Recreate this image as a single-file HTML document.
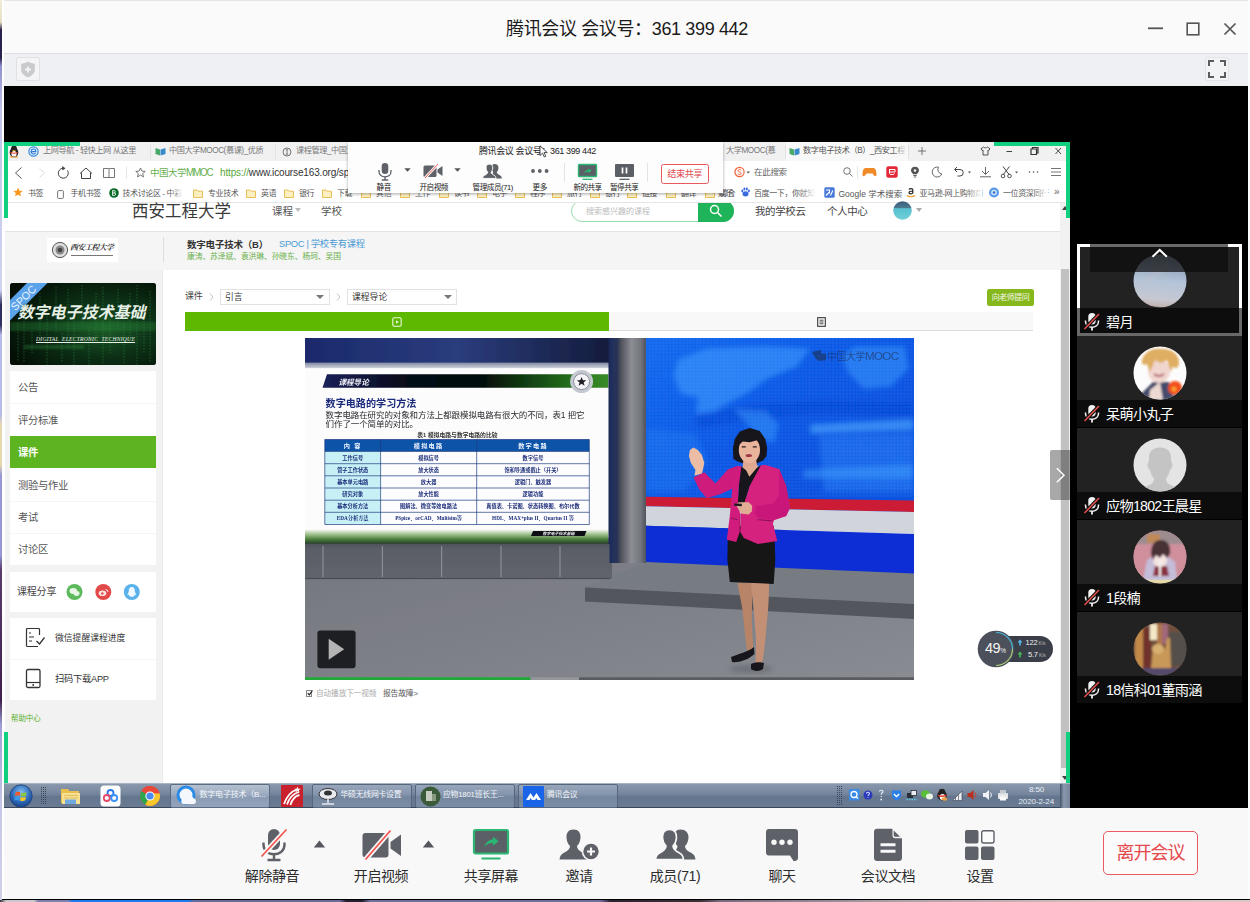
<!DOCTYPE html>
<html lang="zh-CN">
<head>
<meta charset="utf-8">
<title>腾讯会议</title>
<style>
*{box-sizing:border-box;margin:0;padding:0}
html,body{width:1250px;height:902px;overflow:hidden;background:#000}
body{position:relative;font-family:"Liberation Sans","Noto Sans CJK SC",sans-serif;color:#222}
.a{position:absolute}
.t{position:absolute;white-space:nowrap;line-height:1}
/* outer window */
#deskL{left:0;top:0;width:2px;height:902px;background:linear-gradient(#f0ecd8 0,#e8e0c0 22px,#2a2050 30px,#2a2050 58px,#9090d0 66px,#c0c4e8 110px,#d0d4f0 290px,#303060 305px,#303060 325px,#b8bce8 335px,#b8bce8 415px,#e8d8b0 425px,#e8d8b0 465px,#9898d8 475px,#9898d8 555px,#5a3a6a 570px,#40204a 700px,#a0a0d8 725px,#c8c8e8 810px,#d0d0e8 902px)}
#titlebar{left:4px;top:0;width:1246px;height:53px;background:#fafafb;border-top:1px solid #e4e4e6}
#bar2{left:4px;top:53px;width:1246px;height:33px;background:#eff0f3;border-top:1px solid #dcdde0}
#stage{left:4px;top:86px;width:1246px;height:722px;background:#000}
#toolbar{left:4px;top:808px;width:1246px;height:91px;background:#f8f8f9}
#deskB{left:0;top:899.500px;width:1250px;height:2.500px;background:linear-gradient(90deg,#303038 0,#c8c8d0 6px,#c8c8d0 34px,#8080b0 38px,#8080b0 68px,#1a7af0 72px,#1a7af0 188px,#6a6a9a 194px,#6a6a9a 340px,#202030 346px,#202030 362px,#7070a0 370px,#7070a0 600px,#2a2430 610px,#3a3038 700px,#7a6a80 720px,#b0a0a8 900px,#d0c0c0 1100px,#d8c8c8 1250px)}
/* shared screen */
#share{left:4px;top:142px;width:1066px;height:666px;background:#fff;overflow:hidden}
</style>
</head>
<body>
<div class="a" id="titlebar"></div>
<div class="a" id="bar2"></div>
<div class="a" id="stage"></div>
<div class="a" id="share">
<div class="a" id="sw" style="left:-4px;top:-142px;width:1250px;height:902px">
<style>
#sw .t{color:#555}
.tab{font-size:8.200px;top:147px;color:#777!important;letter-spacing:-0.45px}
.bm{font-size:8px;top:190px;color:#555!important;letter-spacing:-0.400px}
.fold{position:absolute;top:189px;width:10px;height:9px}
</style>
<!-- tab bar -->
<div class="a" style="left:5px;top:142px;width:1065px;height:19px;background:#f1f1f2"></div>
<div class="a" style="left:5px;top:161px;width:1065px;height:41px;background:#fff"></div>
<div class="a" style="left:5px;top:202px;width:1065px;height:1px;background:#e6e6e6"></div>
<div class="a" style="left:786px;top:142px;width:122px;height:19px;background:#f8f8f8"></div>
<div class="a" style="left:150px;top:145px;width:1px;height:14px;background:#e2e2e2"></div>
<div class="a" style="left:275px;top:145px;width:1px;height:14px;background:#e2e2e2"></div>
<div class="a" style="left:785px;top:145px;width:1px;height:14px;background:#e2e2e2"></div>
<div class="a" style="left:908px;top:145px;width:1px;height:14px;background:#e2e2e2"></div>
<!-- QQ penguin -->
<svg class="a" style="left:9px;top:145px" width="10" height="13" viewBox="0 0 10 13"><ellipse cx="5" cy="7.500" rx="4.300" ry="4.800" fill="#222"/><ellipse cx="5" cy="4" rx="3" ry="3.500" fill="#222"/><ellipse cx="5" cy="8.800" rx="2.600" ry="2.800" fill="#fff"/><path d="M1.500 6.800Q5 8.600 8.500 6.800L8.500 8Q5 9.600 1.500 8Z" fill="#e03a2a"/><ellipse cx="5" cy="5.600" rx="1.600" ry=".7" fill="#f0a020"/><ellipse cx="2.800" cy="12" rx="1.800" ry=".8" fill="#f0a020"/><ellipse cx="7.200" cy="12" rx="1.800" ry=".8" fill="#f0a020"/></svg>
<!-- e icon -->
<svg class="a" style="left:28px;top:146px" width="11" height="11" viewBox="0 0 11 11"><circle cx="5.500" cy="5.500" r="4.600" fill="#e8f2fc" stroke="#3a8ee0" stroke-width="1.300"/><path d="M3.200 5.600H7.800C7.800 3.800 6.800 3 5.500 3S3.200 4 3.200 5.600C3.200 7.300 4.200 8 5.600 8C6.500 8 7.200 7.700 7.600 7.200" stroke="#2a7ad8" stroke-width="1.100" fill="none"/></svg>
<div class="t tab" style="left:43px">上网导航 - 轻快上网 从这里</div>
<svg class="a" style="left:155px;top:147px" width="11" height="9" viewBox="0 0 11 9"><path d="M.5 1L5 2.500V8.500L.5 7Z" fill="#4aa868"/><path d="M10.500 1L5.500 2.500V8.500L10.500 7Z" fill="#3a8ac8"/></svg>
<div class="t tab" style="left:169px">中国大学MOOC(慕课)_优质</div>
<svg class="a" style="left:282px;top:147px" width="10" height="10" viewBox="0 0 10 10"><circle cx="5" cy="5" r="4" fill="none" stroke="#666" stroke-width=".9"/><path d="M5 2.800V7.200M3.800 2.800H6.200M3.800 7.200H6.200" stroke="#666" stroke-width=".8"/></svg>
<div class="t tab" style="left:296px">课程管理_中国大学MOOC</div>
<div class="t tab" style="left:726px">大学MOOC(慕</div>
<svg class="a" style="left:789px;top:147px" width="11" height="9" viewBox="0 0 11 9"><path d="M.5 1L5 2.500V8.500L.5 7Z" fill="#4aa868"/><path d="M10.500 1L5.500 2.500V8.500L10.500 7Z" fill="#3a8ac8"/></svg>
<div class="t tab" style="left:803px;color:#555!important">数字电子技术（B）_西安工程</div>
<div class="a" style="left:892px;top:143px;width:16px;height:18px;background:linear-gradient(90deg,rgba(248,248,248,0),#f8f8f8)"></div>
<svg class="a" style="left:917px;top:146px" width="10" height="10" viewBox="0 0 10 10"><path d="M5 1V9M1 5H9" stroke="#666" stroke-width=".9"/></svg>
<svg class="a" style="left:980px;top:146px" width="11" height="10" viewBox="0 0 11 10"><path d="M3.500 1L1 2.800L2.200 4.500L3 4V9H8V4L8.800 4.500L10 2.800L7.500 1C7 2 4 2 3.500 1Z" fill="none" stroke="#444" stroke-width=".9"/></svg>
<svg class="a" style="left:1005px;top:146px" width="60" height="10" viewBox="0 0 60 10"><path d="M1.500 5.500H7" stroke="#444" stroke-width="1"/><path d="M26 3H31.500V8.500H26ZM27.500 3V1.500H33V7H31.500" stroke="#333" stroke-width="1.200" fill="none"/><path d="M50.500 2L56 8M56 2L50.500 8" stroke="#444" stroke-width="1"/></svg>
<!-- nav bar -->
<svg class="a" style="left:12px;top:164px" width="110" height="18" viewBox="0 0 110 18">
<path d="M9.500 3.500L3.500 9L9.500 14.500" stroke="#555" stroke-width="1" fill="none"/>
<path d="M27.500 4.500L32.500 9L27.500 13.500" stroke="#ddd" stroke-width="1" fill="none"/>
<path d="M55.500 6.500A5 5 0 1 1 51 4.200" stroke="#444" stroke-width="1" fill="none"/><path d="M50 2L53.500 4.200L50.500 6.500Z" fill="#444"/>
<path d="M68 9.500L74 4L80 9.500M69.500 8.500V14.500H78.500V8.500" stroke="#444" stroke-width="1" fill="none"/>
<path d="M91.500 4.500H96.500Q97 4.500 97 5V13.500M97 13.500H91.500V4.500M97 5Q97 4.500 97.500 4.500H102.500V13.500H97" stroke="#666" stroke-width=".9" fill="none"/>
</svg>
<div class="a" style="left:126px;top:166px;width:1px;height:13px;background:#e8e8e8"></div>
<svg class="a" style="left:135px;top:167px" width="11" height="11" viewBox="0 0 11 11"><path d="M5.500 1L6.900 4.100L10.200 4.400L7.700 6.600L8.500 9.900L5.500 8.100L2.500 9.900L3.300 6.600L.8 4.400L4.100 4.100Z" fill="none" stroke="#555" stroke-width=".8"/></svg>
<div class="t" style="left:150px;top:168px;font-size:9.500px;color:#68b050!important;letter-spacing:-0.500px">中国大学<span style="font-size:10px;letter-spacing:-1.300px">MMOC</span></div>
<div class="t" style="left:220px;top:168px;font-size:10px;color:#333!important;letter-spacing:-0.150px"><span style="color:#58a840">https://</span>www.icourse163.org/spoc/learn</div>
<svg class="a" style="left:734px;top:166px" width="18" height="12" viewBox="0 0 18 12"><circle cx="5.500" cy="6" r="4.600" fill="#fff" stroke="#f0603a" stroke-width="1.200"/><path d="M7.200 4.200C6.500 3.300 4 3.300 4 4.800C4 6.200 7.200 5.800 7.200 7.300C7.200 8.800 4.500 8.800 3.700 7.800" stroke="#f0603a" stroke-width="1" fill="none"/><path d="M12.500 5.500L14.200 7.500L16 5.500Z" fill="#555"/></svg>
<div class="t" style="left:754px;top:168px;font-size:8.500px;color:#666!important;letter-spacing:-0.300px">在此搜索</div>
<svg class="a" style="left:842px;top:166px" width="12" height="12" viewBox="0 0 12 12"><circle cx="5" cy="5" r="3.300" fill="none" stroke="#666" stroke-width=".9"/><path d="M7.500 7.500L10.500 10.500" stroke="#666" stroke-width=".9"/></svg>
<div class="a" style="left:857px;top:166px;width:1px;height:13px;background:#e8e8e8"></div>
<svg class="a" style="left:862px;top:167px" width="15" height="10" viewBox="0 0 15 10"><path d="M3.500 1H11.500C14 1 14.500 5 14.500 8C14.500 9.500 12.500 9.500 11.500 8L10.500 6.500H4.500L3.500 8C2.500 9.500 .5 9.500 .5 8C.5 5 1 1 3.500 1Z" fill="#f08a28"/></svg>
<svg class="a" style="left:886px;top:166px" width="12" height="12" viewBox="0 0 12 12"><rect x=".3" y=".3" width="11.400" height="11.400" rx="2" fill="#e02838"/><path d="M3 3.500H9V6H3.500M3.500 3.500V7.500C3.500 9 8.500 9 8.500 7.500" stroke="#fff" stroke-width="1" fill="none"/></svg>
<svg class="a" style="left:910px;top:166px" width="10" height="12" viewBox="0 0 10 12"><path d="M5 .8C2.500 .8 1 2.500 1 4.500C1 6.200 2.500 7 3 8.200H7C7.500 7 9 6.200 9 4.500C9 2.500 7.500 .8 5 .8Z" fill="#555"/><path d="M3.300 9.500H6.700M3.800 11H6.200" stroke="#555" stroke-width=".9"/><circle cx="5" cy="4.500" r="1.200" fill="#fff"/></svg>
<svg class="a" style="left:931px;top:166px" width="12" height="12" viewBox="0 0 12 12"><path d="M7.500 1.200A5 5 0 1 0 10.800 8A4.500 4.500 0 0 1 7.500 1.200Z" fill="none" stroke="#555" stroke-width=".9"/></svg>
<svg class="a" style="left:953px;top:166px" width="20" height="12" viewBox="0 0 20 12"><path d="M2 3.500H7A3.200 3.200 0 0 1 7 10H4.500" stroke="#444" stroke-width="1" fill="none"/><path d="M4 1L1.500 3.500L4 6" stroke="#444" stroke-width="1" fill="none"/><path d="M15 5.500L16.500 7.500L18 5.500Z" fill="#555"/></svg>
<svg class="a" style="left:979px;top:166px" width="13" height="12" viewBox="0 0 13 12"><path d="M6.500 1V8M3 5L6.500 8.500L10 5M1 10.800H12" stroke="#555" stroke-width=".9" fill="none"/></svg>
<svg class="a" style="left:1000px;top:165px" width="20" height="14" viewBox="0 0 20 14"><path d="M3 1.500L9.500 10M9.500 1.500L3 10" stroke="#444" stroke-width="1"/><circle cx="3" cy="11" r="1.800" fill="none" stroke="#444" stroke-width=".9"/><circle cx="9.500" cy="11" r="1.800" fill="none" stroke="#444" stroke-width=".9"/><path d="M15 6.500L16.500 8.500L18 6.500Z" fill="#555"/></svg>
<svg class="a" style="left:1028px;top:170px" width="11" height="4" viewBox="0 0 11 4"><circle cx="1.500" cy="2" r=".8" fill="#555"/><circle cx="5.500" cy="2" r=".8" fill="#555"/><circle cx="9.500" cy="2" r=".8" fill="#555"/></svg>
<svg class="a" style="left:1051px;top:167px" width="10" height="10" viewBox="0 0 10 10"><path d="M0 1.500H10M0 5H10M0 8.500H10" stroke="#666" stroke-width=".9"/></svg>
<!-- bookmarks -->
<svg class="a" style="left:13px;top:187px" width="10" height="10" viewBox="0 0 11 11"><path d="M5.500 .5L7 4L10.700 4.300L7.900 6.700L8.800 10.300L5.500 8.400L2.200 10.300L3.100 6.700L.3 4.300L4 4Z" fill="#f89820"/></svg>
<div class="t bm" style="left:28px">书签</div>
<svg class="a" style="left:57px;top:189.500px" width="7" height="9" viewBox="0 0 7 9"><rect x=".6" y=".6" width="5.800" height="7.800" rx=".8" fill="#fff" stroke="#666" stroke-width=".9"/></svg>
<div class="t bm" style="left:70.500px">手机书签</div>
<svg class="a" style="left:109px;top:187.500px" width="10" height="10" viewBox="0 0 10 10"><circle cx="5" cy="5" r="4.800" fill="#0a6a2a"/><path d="M3.600 2.600V7.400H5.500C7 7.400 7 5 5.500 5H3.600M5.300 5C6.600 5 6.600 2.600 5.300 2.600H3.600" stroke="#fff" stroke-width=".9" fill="none"/></svg>
<div class="t bm" style="left:122.500px">技术讨论区 - 中彩</div>
<div class="a" style="left:168px;top:186px;width:18px;height:14px;background:linear-gradient(90deg,rgba(255,255,255,0),#fff)"></div>
<svg class="fold" style="left:193px" viewBox="0 0 10 9"><path d="M.5 1H4L5 2.200H9.500V8.500H.5Z" fill="#fdf0c0" stroke="#e8b848" stroke-width=".9"/></svg><div class="t bm" style="left:208px">专业技术</div>
<svg class="fold" style="left:246px" viewBox="0 0 10 9"><path d="M.5 1H4L5 2.200H9.500V8.500H.5Z" fill="#fdf0c0" stroke="#e8b848" stroke-width=".9"/></svg><div class="t bm" style="left:261px">英语</div>
<svg class="fold" style="left:284px" viewBox="0 0 10 9"><path d="M.5 1H4L5 2.200H9.500V8.500H.5Z" fill="#fdf0c0" stroke="#e8b848" stroke-width=".9"/></svg><div class="t bm" style="left:299px">银行</div>
<svg class="fold" style="left:322px" viewBox="0 0 10 9"><path d="M.5 1H4L5 2.200H9.500V8.500H.5Z" fill="#fdf0c0" stroke="#e8b848" stroke-width=".9"/></svg><div class="t bm" style="left:337px">下载</div>
<svg class="fold" style="left:361px" viewBox="0 0 10 9"><path d="M.5 1H4L5 2.200H9.500V8.500H.5Z" fill="#fdf0c0" stroke="#e8b848" stroke-width=".9"/></svg><div class="t bm" style="left:376px">其他</div><svg class="fold" style="left:400px" viewBox="0 0 10 9"><path d="M.5 1H4L5 2.200H9.500V8.500H.5Z" fill="#fdf0c0" stroke="#e8b848" stroke-width=".9"/></svg><div class="t bm" style="left:415px">工作</div><svg class="fold" style="left:439px" viewBox="0 0 10 9"><path d="M.5 1H4L5 2.200H9.500V8.500H.5Z" fill="#fdf0c0" stroke="#e8b848" stroke-width=".9"/></svg><div class="t bm" style="left:454px">读书</div><svg class="fold" style="left:477px" viewBox="0 0 10 9"><path d="M.5 1H4L5 2.200H9.500V8.500H.5Z" fill="#fdf0c0" stroke="#e8b848" stroke-width=".9"/></svg><div class="t bm" style="left:492px">电子</div><svg class="fold" style="left:515px" viewBox="0 0 10 9"><path d="M.5 1H4L5 2.200H9.500V8.500H.5Z" fill="#fdf0c0" stroke="#e8b848" stroke-width=".9"/></svg><div class="t bm" style="left:530px">程序</div><svg class="fold" style="left:552px" viewBox="0 0 10 9"><path d="M.5 1H4L5 2.200H9.500V8.500H.5Z" fill="#fdf0c0" stroke="#e8b848" stroke-width=".9"/></svg><div class="t bm" style="left:567px">旅行</div><svg class="fold" style="left:590px" viewBox="0 0 10 9"><path d="M.5 1H4L5 2.200H9.500V8.500H.5Z" fill="#fdf0c0" stroke="#e8b848" stroke-width=".9"/></svg><div class="t bm" style="left:605px">银行</div><svg class="fold" style="left:627px" viewBox="0 0 10 9"><path d="M.5 1H4L5 2.200H9.500V8.500H.5Z" fill="#fdf0c0" stroke="#e8b848" stroke-width=".9"/></svg><div class="t bm" style="left:642px">链接</div><svg class="fold" style="left:666px" viewBox="0 0 10 9"><path d="M.5 1H4L5 2.200H9.500V8.500H.5Z" fill="#fdf0c0" stroke="#e8b848" stroke-width=".9"/></svg><div class="t bm" style="left:681px">翻译</div><svg class="fold" style="left:705px" viewBox="0 0 10 9"><path d="M.5 1H4L5 2.200H9.500V8.500H.5Z" fill="#fdf0c0" stroke="#e8b848" stroke-width=".9"/></svg><div class="t bm" style="left:720px">综合</div><div class="t bm" style="left:718px">娱乐</div>
<svg class="a" style="left:741px;top:187px" width="9" height="10" viewBox="0 0 9 10"><ellipse cx="4.500" cy="6.800" rx="3" ry="2.600" fill="#3a6ae0"/><ellipse cx="1.300" cy="4" rx="1" ry="1.400" fill="#3a6ae0"/><ellipse cx="3.400" cy="2" rx="1" ry="1.400" fill="#3a6ae0"/><ellipse cx="5.800" cy="2" rx="1" ry="1.400" fill="#3a6ae0"/><ellipse cx="7.800" cy="4" rx="1" ry="1.400" fill="#3a6ae0"/></svg>
<div class="t bm" style="left:754px">百度一下，你就知</div>
<div class="a" style="left:798px;top:186px;width:18px;height:14px;background:linear-gradient(90deg,rgba(255,255,255,0),#fff)"></div>
<svg class="a" style="left:824px;top:187px" width="11" height="11" viewBox="0 0 11 11"><rect x=".3" y=".3" width="10.400" height="10.400" rx="1.500" fill="#4a7ad8"/><path d="M2 3H5.500V6.500M2 8.500L5.500 5M6.500 8.500L8.800 3.500" stroke="#fff" stroke-width="1.100" fill="none"/></svg>
<div class="t bm" style="left:838.500px;font-size:8.500px;letter-spacing:0">Google 学术搜索</div>
<svg class="a" style="left:906px;top:186px" width="10" height="12" viewBox="0 0 10 12"><path d="M3 3.500C3.500 2.300 6.800 2 6.800 4V7.500M6.800 5C4.500 5 3 5.500 3 6.800C3 8.200 5.500 8.200 6.800 6.800" stroke="#222" stroke-width="1.200" fill="none"/><path d="M.8 9.500Q5 12 9.200 9.500" stroke="#f09820" stroke-width="1.100" fill="none"/></svg>
<div class="t bm" style="left:919.500px">亚马逊-网上购物商</div>
<div class="a" style="left:964px;top:186px;width:18px;height:14px;background:linear-gradient(90deg,rgba(255,255,255,0),#fff)"></div>
<svg class="a" style="left:988px;top:187px" width="12" height="11" viewBox="0 0 12 11"><circle cx="6" cy="5.500" r="5" fill="#5a9ae8"/><circle cx="6" cy="5.500" r="2.800" fill="#d0e4fa"/><circle cx="6" cy="5.500" r="1.300" fill="#3a70c8"/></svg>
<div class="t bm" style="left:1003px">一位资深同行</div>
<div class="a" style="left:1034px;top:186px;width:14px;height:14px;background:linear-gradient(90deg,rgba(255,255,255,0),#fff)"></div>
<div class="t" style="left:1054px;top:187px;font-size:10px;color:#666!important">»</div>

<!-- page header -->
<div class="a" style="left:5px;top:203px;width:1056px;height:28px;background:#fff"></div>
<div class="a" style="left:5px;top:231px;width:1056px;height:39px;background:#f5f5f5;border-top:1px solid #e4e4e4"></div>
<div class="t" style="left:132px;top:203.300px;font-size:16.500px;color:#3a3a3a!important;letter-spacing:0">西安工程大学</div>
<div class="t" style="left:272px;top:205.600px;font-size:10.500px;color:#555!important">课程</div>
<svg class="a" style="left:295px;top:208px" width="6" height="4" viewBox="0 0 6 4"><path d="M0 0H6L3 4Z" fill="#bbb"/></svg>
<div class="t" style="left:321px;top:205.600px;font-size:10.500px;color:#555!important">学校</div>
<div class="a" style="left:5px;top:203px;width:1056px;height:28px;overflow:hidden">
<div class="a" style="left:566px;top:-3px;width:163px;height:22px;border:1px solid #9adcb0;border-radius:11px;background:#fff"></div>
<div class="t" style="left:581px;top:4.500px;font-size:8px;color:#bbb!important">搜索感兴趣的课程</div>
<div class="a" style="left:693px;top:-3px;width:36px;height:22px;border-radius:0 11px 11px 0;background:#20b45a"></div>
<svg class="a" style="left:704px;top:1px" width="14" height="14" viewBox="0 0 14 14"><circle cx="5.500" cy="5.500" r="4" fill="none" stroke="#fff" stroke-width="1.500"/><path d="M8.500 8.500L12.500 12.500" stroke="#fff" stroke-width="1.600"/></svg>
</div>
<div class="t" style="left:755px;top:206px;font-size:10.500px;color:#444!important;letter-spacing:-0.4px">我的学校云</div>
<div class="t" style="left:827px;top:206px;font-size:10.500px;color:#444!important;letter-spacing:-0.4px">个人中心</div>
<svg class="a" style="left:893px;top:201px" width="19" height="19" viewBox="0 0 19 19"><defs><linearGradient id="ug" x1="0" y1="0" x2="0" y2="1"><stop offset="0" stop-color="#3a5a78"/><stop offset=".35" stop-color="#4a7a90"/><stop offset=".4" stop-color="#58c0d0"/><stop offset="1" stop-color="#70d0d8"/></linearGradient></defs><circle cx="9.500" cy="9.500" r="9.300" fill="url(#ug)"/></svg>
<svg class="a" style="left:916px;top:208px" width="6" height="4" viewBox="0 0 6 4"><path d="M0 0H6L3 4Z" fill="#aaa"/></svg>
<!-- course header band -->
<div class="a" style="left:47px;top:238px;width:71px;height:24px;background:#fff"></div>
<svg class="a" style="left:51px;top:241px" width="66" height="18" viewBox="0 0 66 18"><circle cx="9" cy="9" r="7.600" fill="#ddd" stroke="#555" stroke-width="1"/><circle cx="9" cy="9" r="4.500" fill="#888"/><circle cx="9" cy="9" r="2.300" fill="#444"/></svg>
<div class="t" style="left:70px;top:243.500px;font-size:7.800px;font-family:'Liberation Serif','Noto Serif CJK SC',serif;font-style:italic;font-weight:bold;color:#333!important;letter-spacing:-0.6px">西安工程大学</div>
<div class="a" style="left:71px;top:254.500px;width:42px;height:1.500px;background:#777"></div>
<div class="a" style="left:163px;top:237px;width:1px;height:25px;background:#ddd"></div>
<div class="t" style="left:187px;top:239.500px;font-size:9.500px;font-weight:bold;color:#333!important;letter-spacing:-0.2px">数字电子技术（B）</div>
<div class="t" style="left:279px;top:239.500px;font-size:9.300px;color:#4a9ad4!important;letter-spacing:-0.3px">SPOC | 学校专有课程</div>
<div class="t" style="left:187px;top:253px;font-size:7.800px;color:#6ab04a!important;letter-spacing:-0.1px">康涛、苏泽斌、袁洪琳、孙晓东、杨珂、吴国</div>
<!-- sidebar -->
<div class="a" style="left:5px;top:270px;width:157px;height:513px;background:#f2f2f2"></div>
<div class="a" style="left:162px;top:270px;width:899px;height:513px;background:#fff"></div>
<div class="a" style="left:162px;top:270px;width:1px;height:513px;background:#ebebeb"></div>
<!-- course image -->
<div class="a" style="left:10px;top:283px;width:146px;height:82px;border-radius:3px;overflow:hidden;background:#07200f">
<svg class="a" style="left:0;top:0" width="146" height="82" viewBox="0 0 146 82">
<defs><radialGradient id="cg" cx=".65" cy=".55" r=".7"><stop offset="0" stop-color="#1c5c28"/><stop offset=".5" stop-color="#0c3016"/><stop offset="1" stop-color="#041006"/></radialGradient>
<filter id="cb"><feGaussianBlur stdDeviation="1.200"/></filter></defs>
<rect width="146" height="82" fill="url(#cg)"/>
<g stroke="#3a9a48" stroke-width="1" opacity=".45" stroke-dasharray="1.500 1.500">
<path d="M8 40V78M14 20V80M22 48V70M30 10V60M37 30V82M46 4V50M52 50V80M58 6V66M64 36V82M72 2V40M79 44V82M86 10V58M93 4V82M100 30V70M108 6V48M114 40V82M120 10V60M127 2V82M134 20V70M140 8V80"/></g>
<rect x="0" y="39" width="146" height="9" fill="#2a8a3a" opacity=".35" filter="url(#cb)"/>
<rect x="14" y="62" width="60" height="4" fill="#3aa04a" opacity=".3" filter="url(#cb)"/>
<path d="M0 37.500L37.500 0H17L0 17Z" fill="#5aa2ea"/>
</svg>
<div class="t" style="left:7.500px;top:21.500px;font-size:16px;font-weight:bold;font-style:italic;color:#e6efe6!important;letter-spacing:0;text-shadow:0 0 2px #083010">数字电子技术基础</div>
<div class="t" style="left:21px;top:54px;font-size:5.600px;font-family:'Liberation Serif',serif;font-style:italic;color:#e8f0e8!important;letter-spacing:.25px;text-decoration:underline;padding:0 3px 0 5px">DIGITAL&nbsp; ELECTRONIC&nbsp; TECHNIQUE</div>
<div class="t" style="left:1px;top:8px;font-size:10.800px;color:#eaf4ff!important;transform:rotate(-45deg);transform-origin:left top;left:-1.500px;top:22px;letter-spacing:0">SPOC</div>
</div>
<!-- menu -->
<div class="a" style="left:10px;top:371px;width:146px;height:194px;background:#fff"></div>
<div class="t" style="left:18px;top:383.3px;font-size:10.300px;color:#555!important;letter-spacing:-0.3px">公告</div><div class="a" style="left:10px;top:403.4px;width:146px;height:1px;background:#f5f5f5"></div><div class="t" style="left:18px;top:415.7px;font-size:10.300px;color:#555!important;letter-spacing:-0.3px">评分标准</div><div class="a" style="left:10px;top:436.3px;width:146px;height:31.500px;background:#5cb420"></div><div class="t" style="left:18px;top:448.1px;font-size:10.300px;color:#fff!important;font-weight:bold;letter-spacing:-0.3px">课件</div><div class="t" style="left:18px;top:480.5px;font-size:10.300px;color:#555!important;letter-spacing:-0.3px">测验与作业</div><div class="a" style="left:10px;top:500.6px;width:146px;height:1px;background:#f5f5f5"></div><div class="t" style="left:18px;top:512.9px;font-size:10.300px;color:#555!important;letter-spacing:-0.3px">考试</div><div class="a" style="left:10px;top:533.0px;width:146px;height:1px;background:#f5f5f5"></div><div class="t" style="left:18px;top:545.3px;font-size:10.300px;color:#555!important;letter-spacing:-0.3px">讨论区</div>
<!-- share box -->
<div class="a" style="left:10px;top:572px;width:146px;height:40px;background:#fff"></div>
<div class="t" style="left:17px;top:587px;font-size:10px;color:#444!important;letter-spacing:-0.2px">课程分享</div>
<svg class="a" style="left:66px;top:583px" width="75" height="18" viewBox="0 0 75 18">
<circle cx="8.500" cy="9" r="8" fill="#5cba5c"/><ellipse cx="7.300" cy="8" rx="3.800" ry="3" fill="#e8f6e8"/><ellipse cx="10.500" cy="10.500" rx="3" ry="2.400" fill="#e8f6e8"/>
<circle cx="37.300" cy="9" r="8" fill="#e24a4a"/><ellipse cx="36.500" cy="10.300" rx="3.800" ry="2.800" fill="#fbe4e4"/><circle cx="36.300" cy="10.500" r="1.200" fill="#e24a4a"/><path d="M39.500 6.500A2.500 2.500 0 0 1 42 9" stroke="#fbe4e4" stroke-width="1" fill="none"/>
<circle cx="65.800" cy="9" r="8" fill="#5ab2ea"/><path d="M65.800 4C63.500 4 62.800 6 62.800 8C62.800 9.500 61.500 10.500 61.500 12.200C62.300 12.200 62.800 11.500 62.800 11.500C63 13 64 13.800 65.800 13.800S68.600 13 68.800 11.500C68.800 11.500 69.300 12.200 70.100 12.200C70.100 10.500 68.800 9.500 68.800 8C68.800 6 68.100 4 65.800 4Z" fill="#f0f8ff"/>
</svg>
<!-- box 3 -->
<div class="a" style="left:10px;top:618px;width:146px;height:82px;background:#fff"></div>
<div class="a" style="left:10px;top:658.500px;width:146px;height:1px;background:#f5f5f5"></div>
<svg class="a" style="left:25px;top:627px" width="22" height="21" viewBox="0 0 22 21"><path d="M14.500 8V2.500Q14.500 1.500 13.500 1.500H2.500Q1.500 1.500 1.500 2.500V18.500Q1.500 19.500 2.500 19.500H13" stroke="#333" stroke-width="1.200" fill="none"/><path d="M4 6H6M4 10H9M4 14H7" stroke="#333" stroke-width="1.200"/><path d="M11.500 14L14.500 17L19.500 10.500" stroke="#333" stroke-width="1.300" fill="none"/></svg>
<div class="t" style="left:55px;top:634px;font-size:8.800px;color:#333!important;letter-spacing:0">微信提醒课程进度</div>
<svg class="a" style="left:25px;top:668px" width="17" height="21" viewBox="0 0 17 21"><rect x="1.500" y="1.500" width="13.500" height="18" rx="1.500" fill="none" stroke="#333" stroke-width="1.300"/><path d="M1.500 14.500H15" stroke="#333" stroke-width="1.200"/><circle cx="8.200" cy="17" r=".9" fill="#333"/></svg>
<div class="t" style="left:55px;top:675px;font-size:9.300px;color:#333!important;letter-spacing:-0.300px">扫码下载APP</div>
<div class="t" style="left:11px;top:715px;font-size:7.500px;color:#5cb02c!important;letter-spacing:-0.100px">帮助中心</div>
<!-- breadcrumb -->
<div class="t" style="left:185px;top:292px;font-size:9px;color:#444!important;letter-spacing:-0.300px">课件</div>
<svg class="a" style="left:209px;top:293px" width="5" height="8" viewBox="0 0 5 8"><path d="M1 .5L4 4L1 7.500" stroke="#bbb" stroke-width=".9" fill="none"/></svg>
<div class="a" style="left:220px;top:289px;width:110px;height:16px;border:1px solid #e2e2e2;background:#fff"></div>
<div class="t" style="left:225px;top:292.500px;font-size:8.800px;color:#333!important">引言</div>
<svg class="a" style="left:316px;top:295px" width="8" height="4" viewBox="0 0 8 4"><path d="M0 0H8L4 4Z" fill="#777"/></svg>
<svg class="a" style="left:336px;top:293px" width="5" height="8" viewBox="0 0 5 8"><path d="M1 .5L4 4L1 7.500" stroke="#bbb" stroke-width=".9" fill="none"/></svg>
<div class="a" style="left:347px;top:289px;width:110px;height:16px;border:1px solid #e2e2e2;background:#fff"></div>
<div class="t" style="left:352px;top:292.500px;font-size:8.800px;color:#333!important">课程导论</div>
<svg class="a" style="left:443.500px;top:295px" width="8" height="4" viewBox="0 0 8 4"><path d="M0 0H8L4 4Z" fill="#777"/></svg>
<div class="a" style="left:987px;top:289px;width:47px;height:17px;background:#86b71c;border-radius:2.500px"></div>
<div class="t" style="left:987px;top:293.500px;width:47px;text-align:center;font-size:8px;color:#f4f8e8!important;letter-spacing:-0.5px">向老师提问</div>
<!-- tabs -->
<div class="a" style="left:185px;top:312px;width:424px;height:19px;background:#5fb800"></div>
<div class="a" style="left:609px;top:312px;width:424px;height:19px;background:#f8f8f8;border-bottom:1px solid #ddd"></div>
<svg class="a" style="left:392px;top:316.500px" width="10" height="10" viewBox="0 0 10 10"><rect x=".8" y=".8" width="8.400" height="8.400" rx="1.500" fill="none" stroke="#eef8e0" stroke-width="1.100"/><path d="M4 3.200L6.800 5L4 6.800Z" fill="#eef8e0"/></svg>
<svg class="a" style="left:817px;top:316.500px" width="9" height="10" viewBox="0 0 9 10"><rect x=".7" y=".7" width="7.600" height="8.600" fill="#fff" stroke="#333" stroke-width="1.100"/><path d="M2.500 3.200H6.500M2.500 5H6.500M2.500 6.800H6.500" stroke="#333" stroke-width=".9"/></svg>

<svg class="a" style="left:305px;top:338px" width="609" height="342" viewBox="0 0 609 342" font-family="Liberation Sans,Noto Sans CJK SC,sans-serif">
<defs>
<filter id="vb" x="-5%" y="-5%" width="110%" height="110%"><feGaussianBlur stdDeviation="0.55"/></filter>
<filter id="vb3" x="-20%" y="-20%" width="140%" height="140%"><feGaussianBlur stdDeviation="6"/></filter>
<filter id="vb2" x="-20%" y="-20%" width="140%" height="140%"><feGaussianBlur stdDeviation="2.500"/></filter>
<linearGradient id="topb" x1="0" y1="0" x2="1" y2="0"><stop offset="0" stop-color="#1a2a6c"/><stop offset=".5" stop-color="#2a3c7c"/><stop offset="1" stop-color="#141c3c"/></linearGradient>
<linearGradient id="silv" x1="0" y1="0" x2="0" y2="1"><stop offset="0" stop-color="#8088a0"/><stop offset="1" stop-color="#d4d8e0"/></linearGradient>
<linearGradient id="pil" x1="0" y1="0" x2="1" y2="0"><stop offset="0" stop-color="#1c2c5c"/><stop offset=".22" stop-color="#2a3458"/><stop offset=".3" stop-color="#4c4e58"/><stop offset=".6" stop-color="#8c8e94"/><stop offset=".85" stop-color="#74767e"/><stop offset="1" stop-color="#50525c"/></linearGradient>
<linearGradient id="wall" x1="0" y1="0" x2="1" y2="1"><stop offset="0" stop-color="#1268ee"/><stop offset=".35" stop-color="#0a58e6"/><stop offset=".7" stop-color="#084ede"/><stop offset="1" stop-color="#0a54e2"/></linearGradient>
<linearGradient id="stbar" x1="0" y1="0" x2="1" y2="0"><stop offset="0" stop-color="#1a2258"/><stop offset=".3" stop-color="#060818"/><stop offset=".55" stop-color="#040a08"/><stop offset=".75" stop-color="#144a14"/><stop offset=".9" stop-color="#2a7a1e"/><stop offset="1" stop-color="#3a8a2a"/></linearGradient>
<linearGradient id="botb" x1="0" y1="0" x2="0" y2="1"><stop offset="0" stop-color="#f4f6f2"/><stop offset=".35" stop-color="#9cc088"/><stop offset=".7" stop-color="#4a7c3a"/><stop offset="1" stop-color="#26402a"/></linearGradient>
<linearGradient id="flr" x1="0" y1="0" x2="1" y2="1"><stop offset="0" stop-color="#74767e"/><stop offset=".5" stop-color="#7e8088"/><stop offset="1" stop-color="#8a8c94"/></linearGradient>
<linearGradient id="cab" x1="0" y1="0" x2="0" y2="1"><stop offset="0" stop-color="#4a4e56"/><stop offset=".2" stop-color="#5a5e66"/><stop offset="1" stop-color="#60646c"/></linearGradient>
<pattern id="dots" width="3.400" height="3.400" patternUnits="userSpaceOnUse"><rect width="2.500" height="2.500" fill="#6ab0ff"/></pattern>
<clipPath id="vclip"><rect width="609" height="342"/></clipPath>
</defs>
<g clip-path="url(#vclip)">
<g filter="url(#vb)">
<!-- floor -->
<rect x="0" y="200" width="609" height="150" fill="url(#flr)"/>
<!-- platform -->
<path d="M342 224L609 235.5V266L280 249.4Z" fill="#777b83"/>
<path d="M280 249.4L609 266V281L280 263.4Z" fill="#52565c"/>
<!-- cabinets -->
<rect x="0" y="203.5" width="307" height="37.1" fill="url(#cab)"/>
<path d="M18 208V239M77.4 208V239M136.6 208V239M196 208V239M255 208V239" stroke="#888c94" stroke-width="1.200"/>
<path d="M0 240.6H305" stroke="#44484e" stroke-width="1"/>
<!-- TV -->
<rect x="0" y="0" width="305" height="25" fill="url(#topb)"/>
<rect x="0" y="24.6" width="304" height="6" fill="url(#silv)"/>
<rect x="0" y="30.3" width="303.5" height="161.3" fill="#fcfcfc"/>
<rect x="0" y="191.6" width="303.5" height="14.1" fill="url(#botb)"/>
<path d="M228 193H281.5L279.5 198H226Z" fill="#0a0e18"/>
<text x="253.5" y="197.3" font-size="4" font-style="italic" font-weight="bold" fill="#e8e8e8" text-anchor="middle">数字电子技术基础</text>
<!-- slide title bar -->
<path d="M22 36.200H303.500V49.800H17.500Z" fill="url(#stbar)"/>
<text x="33.4" y="46.5" font-size="7.600" font-style="italic" font-weight="bold" fill="#f0f0f8">课程导论</text>
<circle cx="276.6" cy="43.6" r="11.500" fill="#c4c8d0"/><circle cx="276.6" cy="43.6" r="8" fill="#f4f4f6" stroke="#8a8e98" stroke-width="1"/>
<path d="M276.6 39L277.9 42.3L281.3 42.3L278.6 44.4L279.6 47.7L276.6 45.7L273.6 47.7L274.6 44.4L271.9 42.3L275.3 42.3Z" fill="#1a1a22"/>
<text x="20.6" y="68.6" font-size="10.100" font-weight="bold" fill="#1a2a7c">数字电路的学习方法</text>
<text x="20.6" y="80" font-size="8.500" fill="#2a2a30" letter-spacing="-0.1">数字电路在研究的对象和方法上都跟模拟电路有很大的不同，表1 把它</text>
<text x="20.6" y="89.3" font-size="8.500" fill="#2a2a30" letter-spacing="-0.1">们作了一个简单的对比。</text>
<text x="152.4" y="98.5" font-size="5.800" font-weight="bold" fill="#333" text-anchor="middle">表1 模拟电路与数字电路的比较</text>
<rect x="19.8" y="101.5" width="264.5" height="12.0" fill="#0b52a8"/><rect x="19.8" y="113.5" width="55.8" height="73.0" fill="#c6f0f6"/><rect x="75.6" y="113.5" width="208.7" height="73.0" fill="#fdfdff"/><path d="M19.8 101.5H284.3" stroke="#1c3c80" stroke-width=".7"/><path d="M19.8 113.5H284.3" stroke="#1c3c80" stroke-width=".7"/><path d="M19.8 125.7H284.3" stroke="#1c3c80" stroke-width=".7"/><path d="M19.8 137.8H284.3" stroke="#1c3c80" stroke-width=".7"/><path d="M19.8 150.0H284.3" stroke="#1c3c80" stroke-width=".7"/><path d="M19.8 162.2H284.3" stroke="#1c3c80" stroke-width=".7"/><path d="M19.8 174.3H284.3" stroke="#1c3c80" stroke-width=".7"/><path d="M19.8 186.5H284.3" stroke="#1c3c80" stroke-width=".7"/><path d="M19.8 101.5V186.5" stroke="#1c3c80" stroke-width=".7"/><path d="M75.6 101.5V186.5" stroke="#1c3c80" stroke-width=".7"/><path d="M171.7 101.5V186.5" stroke="#1c3c80" stroke-width=".7"/><path d="M284.3 101.5V186.5" stroke="#1c3c80" stroke-width=".7"/><text x="47.7" y="109.5" font-size="6.2" font-weight="bold" fill="#f0f6ff" text-anchor="middle" letter-spacing="1.2">内 容</text><text x="123.6" y="109.5" font-size="6.2" font-weight="bold" fill="#f0f6ff" text-anchor="middle" letter-spacing="1.2">模拟电路</text><text x="228.0" y="109.5" font-size="6.2" font-weight="bold" fill="#f0f6ff" text-anchor="middle" letter-spacing="1.2">数字电路</text><text x="47.7" y="121.6" font-size="5.2" font-weight="bold" fill="#1a2c78" text-anchor="middle">工作信号</text><text x="123.6" y="121.6" font-size="5.2" font-weight="bold" fill="#1a2c78" text-anchor="middle">模拟信号</text><text x="228.0" y="121.6" font-size="5.2" font-weight="bold" fill="#1a2c78" text-anchor="middle">数字信号</text><text x="47.7" y="133.8" font-size="5.2" font-weight="bold" fill="#1a2c78" text-anchor="middle">管子工作状态</text><text x="123.6" y="133.8" font-size="5.2" font-weight="bold" fill="#1a2c78" text-anchor="middle">放大状态</text><text x="228.0" y="133.8" font-size="5.2" font-weight="bold" fill="#1a2c78" text-anchor="middle">饱和导通或截止（开关）</text><text x="47.7" y="145.9" font-size="5.2" font-weight="bold" fill="#1a2c78" text-anchor="middle">基本单元电路</text><text x="123.6" y="145.9" font-size="5.2" font-weight="bold" fill="#1a2c78" text-anchor="middle">放大器</text><text x="228.0" y="145.9" font-size="5.2" font-weight="bold" fill="#1a2c78" text-anchor="middle">逻辑门、触发器</text><text x="47.7" y="158.1" font-size="5.2" font-weight="bold" fill="#1a2c78" text-anchor="middle">研究对象</text><text x="123.6" y="158.1" font-size="5.2" font-weight="bold" fill="#1a2c78" text-anchor="middle">放大性能</text><text x="228.0" y="158.1" font-size="5.2" font-weight="bold" fill="#1a2c78" text-anchor="middle">逻辑功能</text><text x="47.7" y="170.3" font-size="5.2" font-weight="bold" fill="#1a2c78" text-anchor="middle">基本分析方法</text><text x="123.6" y="170.3" font-size="5.2" font-weight="bold" fill="#1a2c78" text-anchor="middle">图解法、微变等效电路法</text><text x="228.0" y="170.3" font-size="5.2" font-weight="bold" fill="#1a2c78" text-anchor="middle">真值表、卡诺图、状态转换图、布尔代数</text><text x="47.7" y="182.4" font-size="5.2" font-weight="bold" fill="#1a2c78" text-anchor="middle" font-family="Liberation Serif,Noto Serif CJK SC,serif">EDA分析方法</text><text x="123.6" y="182.4" font-size="5.2" font-weight="bold" fill="#1a2c78" text-anchor="middle" font-family="Liberation Serif,Noto Serif CJK SC,serif">PSpice、orCAD、Multisim等</text><text x="228.0" y="182.4" font-size="5.2" font-weight="bold" fill="#1a2c78" text-anchor="middle" font-family="Liberation Serif,Noto Serif CJK SC,serif">HDL、MAX+plus II、Quartus II 等</text>
<rect x="303.5" y="0" width="2" height="206" fill="#1a2450"/>
<!-- blue wall -->
<rect x="341" y="0" width="268" height="192" fill="url(#wall)"/>
<g filter="url(#vb2)">
<path d="M388.8 77.6L447.0 66.4L514.2 62.0L608.3 64.2L608.3 77.6L514.2 75.4L447.0 82.1L393.2 91.1Z" fill="#0644d0" opacity=".55"/>
<path d="M373.1 21.6L402.2 10.4L460.4 8.2L505.3 10.4L491.8 28.4L460.4 41.8L442.5 55.2L424.6 64.2L408.9 73.2L391.0 75.4L393.2 59.7L375.3 55.2L368.6 37.3Z" fill="#3a96fc" opacity=".62"/>
<path d="M429.1 70.9L460.4 73.2L473.9 86.6L469.4 104.5L456.0 102.3L442.5 86.6Z" fill="#3a96fc" opacity=".5"/>
<path d="M536.6 17.2L550.1 8.2L599.3 8.2L603.8 30.6L585.9 48.5L559.0 50.8L543.3 35.1Z" fill="#3a96fc" opacity=".55"/>
<path d="M505.3 86.6L608.3 81.0L608.3 92.2L505.3 95.6Z" fill="#50acff" opacity=".6"/>
<path d="M514.2 97.8L608.3 95.6L608.3 153.8L518.7 153.8Z" fill="#2a84f6" opacity=".45"/>
<path d="M498.5 131.4L608.3 126.9L608.3 140.4L498.5 140.4Z" fill="#48a4ff" opacity=".45"/>
<path d="M341.7 91.1L391.0 95.6L402.2 122.4L379.8 153.8L341.7 153.8Z" fill="#2a80f4" opacity=".35"/>
</g>
<rect x="341" y="0" width="268" height="159" fill="url(#dots)" opacity=".12"/>
<!-- stripes -->
<path d="M341 158.8L609 162.5V174L341 168.3Z" fill="#cc1c34"/>
<path d="M341 168.3L609 174V196L341 187.8Z" fill="#d2d4dc"/>
<path d="M341 187.8L609 196V235.5L341 224Z" fill="#0a2ed4"/>
<!-- pillar -->
<rect x="304.5" y="0" width="36.5" height="225" fill="url(#pil)"/>
<!-- watermark -->
<g opacity=".62"><path d="M507 14L516 12V23L511 21Z" fill="#1a2c50"/><path d="M512 15.5H521V22.5H512Z" fill="#203458"/>
<text x="522" y="22" font-size="9.800" fill="#1c2e58" letter-spacing="-0.3">中国大学<tspan font-size="11.500" letter-spacing="-0.6">MOOC</tspan></text></g>
<!-- woman -->
<g>
<ellipse cx="446" cy="331" rx="22" ry="4" fill="#5a5c64" opacity=".5" filter="url(#vb2)"/>
<!-- legs -->
<path d="M432.5 245L447 245C447.500 262 446.500 275 447 288C447.500 300 448 306 448.500 312L442.500 314C440 300 439 285 437.500 272C436 262 434 255 432.500 245Z" fill="#b88468"/>
<path d="M446 245L464 245C464 262 463 275 461.500 288C460.500 302 459 315 457 326L450.500 325C451.500 310 451 298 450 288C449 272 447.500 262 446 245Z" fill="#c49074"/>
<!-- shoes -->
<path d="M426 319C433 316 443 314 449 309L449.5 316C443 322 433 325 427 324Z" fill="#14161c"/>
<path d="M446 326C450 324 456 324 459 325L458 331C454 334 448 333 446 331Z" fill="#14161c"/>
<path d="M424.8 187.7L468.7 187.7L469.7 202.7L470.3 221.6L468.7 245.9L424.8 243.9L422.4 221.6L422.8 201.7Z" fill="#141418"/>
<path d="M428.4 120.9L428.0 109.9L429.8 100.9L434.8 93.6L444.8 90.0L454.7 93.0L460.3 100.9L462.1 109.9L461.5 117.9L458.3 122.3L452.8 124.9L436.8 124.9L431.8 122.9Z" fill="#15131a"/>
<path d="M438.4 121.9L451.2 121.9L452.8 131.9L444.8 141.8L437.2 131.9Z" fill="#dca890"/>
<ellipse cx="444.4" cy="111.9" rx="10.6" ry="13.2" fill="#e8b49c"/>
<path d="M430.8 116.9L430.4 105.9L433.8 97.0L444.8 92.4L455.7 96.0L458.7 105.9L458.7 116.9L456.3 107.9L452.8 101.9L444.8 104.3L437.8 103.5L433.8 106.9Z" fill="#15131a"/>
<ellipse cx="443.8" cy="117.5" rx="3.200" ry="1.500" fill="#a03848"/><path d="M436.8 108.9H440.8M447.8 108.9H451.8" stroke="#2a1a1a" stroke-width="1.200"/>
<path d="M435.8 128.3L443.8 134.3L455.7 127.5L458.7 129.9L444.8 147.8L439.2 165.8L432.8 165.8L433.8 147.8Z" fill="#16141a"/>
<path d="M439.2 128.3L453.8 127.5L444.4 138.8Z" fill="#e0ac94"/>
<path d="M431.8 127.9L422.8 131.5L410.5 145.4L399.3 134.3L388.5 139.4L394.5 151.8L401.9 160.2L414.9 156.2L427.2 150.8L430.8 141.8Z" fill="#cf1b7b"/>
<path d="M431.8 127.9L436.4 128.3L433.8 147.8L432.8 165.8L435.2 175.7L434.8 193.7L431.2 204.1L421.8 201.7L424.8 177.7L427.2 150.8Z" fill="#d21d7d"/>
<path d="M455.7 127.5L459.7 126.7L474.3 131.1L481.1 147.8L485.1 169.8L481.1 178.1L469.1 182.1L467.9 185.7L472.3 202.9L452.8 206.1L438.8 200.1L435.2 193.7L436.0 175.7L439.2 165.8L444.8 147.8Z" fill="#d6207f"/>
<path d="M474.3 131.9L481.1 147.8L485.1 169.8L481.1 178.1L469.1 182.1L452.8 180.1L449.8 175.7L450.8 167.8L468.7 165.8L473.7 157.8Z" fill="#c8187a"/>
<path d="M452.8 181.7L467.7 182.9" stroke="#8a1058" stroke-width="1"/><path d="M425.8 180.1L432.4 181.7" stroke="#8a1058" stroke-width="1"/><path d="M435.2 175.7L434.8 193.7" stroke="#9a1460" stroke-width=".8"/>
<path d="M430.8 166.8L433.8 164.2L443.8 164.2L447.2 167.8L446.8 173.3L443.8 176.5L436.8 175.7L433.8 171.7Z" fill="#e0ac94"/><path d="M429.2 165.4L436.8 165.8L436.8 168.2L429.2 167.8Z" fill="#1a1a20"/>
<path d="M384.9 111.9L388.5 109.5L392.9 111.9L396.9 116.9L399.3 124.9L397.9 131.9L396.9 135.5L389.3 137.8L390.5 131.9L385.9 124.9L383.9 117.9Z" fill="#ecbca4"/>
</g>
</g>
<!-- play button -->
<rect x="12.4" y="292.4" width="38.200" height="37.800" rx="3" fill="#1d1f23"/>
<path d="M23.7 300.8L39.2 311.3L23.7 321.8Z" fill="#b4b4b4"/>
<!-- progress -->
<rect x="0" y="339.2" width="609" height="3.500" fill="#94969a"/>
<rect x="274" y="339.2" width="335" height="3.500" fill="#5a5c62"/>
<rect x="0" y="339.2" width="225.4" height="3.500" fill="#22a838"/>
</g>
</svg>

<!-- under video -->
<div class="a" style="left:305.500px;top:690px;width:6.500px;height:6.500px;border:1px solid #888;background:#f4f4f4"></div>
<svg class="a" style="left:305.500px;top:689px" width="8" height="8" viewBox="0 0 8 8"><path d="M1.800 4.200L3.300 5.800L6.500 1.500" stroke="#222" stroke-width="1.200" fill="none"/></svg>
<div class="t" style="left:316px;top:689.500px;font-size:7.600px;color:#aaa!important;letter-spacing:-0.050px">自动播放下一视频</div>
<div class="t" style="left:383px;top:689.500px;font-size:7.800px;color:#555!important;letter-spacing:-0.200px">报告故障&gt;</div>
<!-- network widget -->
<div class="a" style="left:996px;top:635.500px;width:57px;height:26.500px;border-radius:0 13px 13px 0;background:#3a3e48"></div>
<svg class="a" style="left:977px;top:629.500px" width="38" height="38" viewBox="0 0 38 38"><circle cx="19" cy="19" r="18.300" fill="#4c505a"/><path d="M19 2.500A16.500 16.500 0 0 1 35.500 19" stroke="#48b8d8" stroke-width="1.200" fill="none"/><path d="M35.500 19A16.500 16.500 0 0 1 19 35.500" stroke="#a8c878" stroke-width="1.200" fill="none"/></svg>
<div class="t" style="left:985px;top:641px;font-size:14.500px;color:#f4f4f4!important;font-weight:300;font-family:'Liberation Sans','Noto Sans CJK SC',sans-serif;letter-spacing:-0.5px">49<span style="font-size:6.500px">%</span></div>
<svg class="a" style="left:1017px;top:638.500px" width="6" height="20" viewBox="0 0 6 20"><path d="M3 .5L5.500 3.500H3.800V6.500H2.200V3.500H.5Z" fill="#58b8e8"/><path d="M3 12.500L5.500 15.500H3.800V18.500H2.200V15.500H.5Z" fill="#48b858"/></svg>
<div class="t" style="left:1025.500px;top:638.500px;font-size:7.500px;color:#f0f0f0!important;letter-spacing:-0.200px">122<span style="font-size:5px;color:#bbb"> K/s</span></div>
<div class="t" style="left:1028px;top:651px;font-size:7.500px;color:#f0f0f0!important;letter-spacing:-0.200px">5.7<span style="font-size:5px;color:#bbb"> K/s</span></div>
<!-- scrollbar -->
<div class="a" style="left:1060px;top:203px;width:10px;height:580px;background:#f1f1f1"></div>
<div class="a" style="left:1060.500px;top:268.500px;width:8.500px;height:499px;background:#c1c1c1"></div>
<svg class="a" style="left:1061px;top:205px" width="8" height="6" viewBox="0 0 8 6"><path d="M4 1L7 5H1Z" fill="#444"/></svg>
<svg class="a" style="left:1061px;top:775px" width="8" height="6" viewBox="0 0 8 6"><path d="M4 5L7 1H1Z" fill="#444"/></svg>


<!-- floating meeting bar -->
<div class="a" style="left:348px;top:142px;width:375px;height:51px;background:#fdfdfd;box-shadow:0 1px 3px rgba(0,0,0,.35)"></div>
<div class="t" style="left:479px;top:146.500px;font-size:9px;color:#222!important;letter-spacing:-0.380px">腾讯会议 会议号：361 399 442</div>
<svg class="a" style="left:539px;top:145px" width="9" height="13" viewBox="0 0 9 13"><path d="M1 .8V10.500L3.500 8.200L5.300 12L6.800 11.300L5 7.600H8.300Z" fill="#fff" stroke="#222" stroke-width=".8"/></svg>
<svg class="a" style="left:377px;top:162px" width="16" height="20" viewBox="0 0 16 20"><rect x="4.700" y="1" width="6.600" height="11" rx="3.300" fill="#5f6168"/><path d="M2 8V9.500C2 13 4.800 14.800 8 14.800S14 13 14 9.500V8" stroke="#5f6168" stroke-width="1.300" fill="none"/><path d="M8 14.800V17.500M4.800 18H11.200" stroke="#5f6168" stroke-width="1.400"/></svg>
<div class="t" style="left:376.500px;top:183.500px;font-size:7.600px;color:#222!important;letter-spacing:-0.3px">静音</div>
<svg class="a" style="left:404px;top:167.500px" width="7" height="4" viewBox="0 0 7 4"><path d="M.3 .3H6.700L3.500 3.800Z" fill="#555"/></svg>
<svg class="a" style="left:422px;top:163px" width="23" height="16" viewBox="0 0 23 16"><rect x="1.500" y="2.500" width="13" height="11.500" rx="1.500" fill="#5f6168"/><path d="M15.500 6.500L20.500 3V13L15.500 9.500Z" fill="#5f6168"/><path d="M3 15L16 1" stroke="#fdfdfd" stroke-width="2.600"/><path d="M3 15L16 1" stroke="#f0564f" stroke-width="1"/></svg>
<div class="t" style="left:419.500px;top:183.500px;font-size:7.600px;color:#222!important;letter-spacing:-0.5px">开启视频</div>
<svg class="a" style="left:453.500px;top:167.500px" width="7" height="4" viewBox="0 0 7 4"><path d="M.3 .3H6.700L3.500 3.800Z" fill="#555"/></svg>
<svg class="a" style="left:482px;top:163px" width="21" height="17" viewBox="0 0 44 34"><path d="M26.500 1.500C22 1.500 20 5 20.200 9.500C20.400 13.500 21.500 16 23.500 18C23.500 21 21.500 22.500 18 24.500L22 31.500H41.500C41.200 28.500 40 26.300 37.500 25C33.500 23 31 21 31 18C33 16 34.300 13.500 34.500 9.500C34.700 5 31.500 1.500 26.500 1.500Z" fill="#5f6168"/><path d="M15.500 1.500C10.500 1.500 8.300 5 8.500 9.500C8.700 13.500 10 16 12 18C12 21 9.500 23 5.500 25C3 26.300 1.800 28.500 1.500 31.500H29.500C29.200 28.500 28 26.300 25.500 25C21.500 23 19 21 19 18C21 16 22.300 13.500 22.500 9.500C22.700 5 20.500 1.500 15.500 1.500Z" fill="#5f6168" stroke="#fdfdfd" stroke-width="2"/></svg>
<div class="t" style="left:472.500px;top:183.500px;font-size:7.600px;color:#222!important;letter-spacing:-0.450px">管理成员(71)</div>
<svg class="a" style="left:530px;top:168px" width="20" height="6" viewBox="0 0 20 6"><circle cx="3" cy="3" r="1.900" fill="#5f6168"/><circle cx="9.800" cy="3" r="1.900" fill="#5f6168"/><circle cx="16.600" cy="3" r="1.900" fill="#5f6168"/></svg>
<div class="t" style="left:532.500px;top:183.500px;font-size:7.600px;color:#222!important;letter-spacing:-0.3px">更多</div>
<div class="a" style="left:563.500px;top:163px;width:1px;height:19px;background:#e4e4e4"></div>
<svg class="a" style="left:577px;top:162.500px" width="21" height="18" viewBox="0 0 21 18"><rect x="1.500" y="1.500" width="18" height="12" rx=".8" fill="#5b5f66" stroke="#2bb673" stroke-width="1.400"/><path d="M5.500 16.300H15.500" stroke="#2bb673" stroke-width="1.300"/><path d="M7 10.500C7.500 8 9.500 6.800 11.500 6.800V5.200L14.500 7.700L11.500 10.200V8.700C9.500 8.700 8 9.200 7 10.500Z" fill="#2bb673"/></svg>
<div class="t" style="left:573.500px;top:183.500px;font-size:7.600px;color:#222!important;letter-spacing:-0.6px">新的共享</div>
<svg class="a" style="left:614px;top:162.500px" width="21" height="18" viewBox="0 0 21 18"><rect x="1" y="1" width="19" height="13" rx="1" fill="#5b5f66"/><path d="M5.500 16.300H15.500" stroke="#5b5f66" stroke-width="1.300"/><path d="M8.500 4.500V10.500M12.500 4.500V10.500" stroke="#fff" stroke-width="1.700"/></svg>
<div class="t" style="left:610px;top:183.500px;font-size:7.600px;color:#222!important;letter-spacing:-0.5px">暂停共享</div>
<div class="a" style="left:647px;top:163px;width:1px;height:19px;background:#e4e4e4"></div>
<div class="a" style="left:660.500px;top:164px;width:48.500px;height:19.500px;border:1px solid #e8585c;border-radius:2.500px;background:#fff"></div>
<div class="t" style="left:660.500px;top:169.500px;width:48.500px;text-align:center;font-size:9px;color:#e0484c!important;letter-spacing:-0.2px">结束共享</div>


<!-- side arrow -->
<div class="a" style="left:1050px;top:450px;width:20px;height:49.500px;background:rgba(0,0,0,.34);border-radius:2px 0 0 2px"></div>
<svg class="a" style="left:1054px;top:466px" width="13" height="18" viewBox="0 0 13 18"><path d="M2.800 2.300L10 9.200L2.800 16.200" stroke="#fff" stroke-width="1.500" fill="none"/></svg>
<!-- win7 taskbar -->
<div class="a" style="left:4px;top:783px;width:1066px;height:25px;background:linear-gradient(#8a98ac 0,#74859c 45%,#64768e 55%,#6a7c94 100%);border-top:1px solid #a8b4c4;border-bottom:1px solid #3a4658"></div>
<svg class="a" style="left:9px;top:784px" width="24" height="24" viewBox="0 0 24 24"><defs><radialGradient id="orb" cx=".5" cy=".35" r=".7"><stop offset="0" stop-color="#8ac0f0"/><stop offset=".6" stop-color="#2a68b8"/><stop offset="1" stop-color="#163a78"/></radialGradient></defs><circle cx="12" cy="12" r="11.200" fill="url(#orb)" stroke="#26447a" stroke-width=".8"/><path d="M6.500 8.500Q9 7 11.300 8.300L10.800 11.800Q8.500 10.800 6 12Z" fill="#f05a28"/><path d="M12.300 8.500Q14.800 9.800 17.500 8.300L17 11.800Q14.500 13 11.800 12Z" fill="#8cc83c"/><path d="M5.800 13Q8.300 11.800 10.600 12.800L10.100 16.500Q7.800 15.300 5.300 16.500Z" fill="#3a9ae8"/><path d="M11.600 13Q14.200 14.200 16.800 12.800L16.300 16.300Q13.800 17.600 11.100 16.500Z" fill="#f8c820"/></svg>
<svg class="a" style="left:41px;top:787px" width="5" height="18" viewBox="0 0 5 18"><g fill="#3a4658"><rect x="0" y="0" width="1" height="1"/><rect x="2" y="0" width="1" height="1"/><rect x="4" y="0" width="1" height="1"/><rect x="0" y="2" width="1" height="1"/><rect x="2" y="2" width="1" height="1"/><rect x="4" y="2" width="1" height="1"/><rect x="0" y="4" width="1" height="1"/><rect x="2" y="4" width="1" height="1"/><rect x="4" y="4" width="1" height="1"/><rect x="0" y="6" width="1" height="1"/><rect x="2" y="6" width="1" height="1"/><rect x="4" y="6" width="1" height="1"/><rect x="0" y="8" width="1" height="1"/><rect x="2" y="8" width="1" height="1"/><rect x="4" y="8" width="1" height="1"/><rect x="0" y="10" width="1" height="1"/><rect x="2" y="10" width="1" height="1"/><rect x="4" y="10" width="1" height="1"/><rect x="0" y="12" width="1" height="1"/><rect x="2" y="12" width="1" height="1"/><rect x="4" y="12" width="1" height="1"/><rect x="0" y="14" width="1" height="1"/><rect x="2" y="14" width="1" height="1"/><rect x="4" y="14" width="1" height="1"/><rect x="0" y="16" width="1" height="1"/><rect x="2" y="16" width="1" height="1"/><rect x="4" y="16" width="1" height="1"/><rect x="0" y="18" width="1" height="1"/><rect x="2" y="18" width="1" height="1"/><rect x="4" y="18" width="1" height="1"/></g></svg>
<svg class="a" style="left:59px;top:786px" width="23" height="20" viewBox="0 0 23 20"><path d="M2 3H9L10.500 5H20V17H2Z" fill="#e8c050"/><path d="M3 7H21V18H3Z" fill="#f8e090"/><path d="M5 9.500H19M5 12H19" stroke="#e0c060" stroke-width="1"/><rect x="6" y="13.500" width="11" height="4.500" fill="#70a8e0"/></svg>
<svg class="a" style="left:100px;top:785px" width="21" height="22" viewBox="0 0 21 22"><rect x=".5" y=".5" width="20" height="21" rx="3.500" fill="#fdfdfd"/><circle cx="10.500" cy="8" r="3" fill="none" stroke="#2a78f0" stroke-width="1.800"/><circle cx="6.800" cy="13" r="3" fill="none" stroke="#e84868" stroke-width="1.800"/><circle cx="14.200" cy="13" r="3" fill="none" stroke="#3a90f8" stroke-width="1.800"/></svg>
<svg class="a" style="left:139px;top:785px" width="22" height="22" viewBox="0 0 22 22"><circle cx="11" cy="11" r="10" fill="#e8473a"/><path d="M11 11L2.400 6A10 10 0 0 0 6.300 19.800Z" fill="#2ea64e"/><path d="M11 11L6.300 19.800A10 10 0 0 0 20.600 8.300L11 8.300Z" fill="#f8c72c"/><path d="M11 11L2.400 6A10 10 0 0 1 20.600 8.300H11Z" fill="#e8473a"/><circle cx="11" cy="11" r="4.600" fill="#fff"/><circle cx="11" cy="11" r="3.600" fill="#4a8af0"/></svg>
<div class="a" style="left:170px;top:784px;width:100px;height:23.500px;background:linear-gradient(#b4c0d0 0,#9aaac0 45%,#8a9cb4 55%,#94a4ba 100%);border:1px solid #5a6a80;border-radius:2px"></div>
<svg class="a" style="left:176px;top:785px" width="21" height="21" viewBox="0 0 21 21"><circle cx="10" cy="10" r="8" fill="#f4f8fc" stroke="#2a8ae8" stroke-width="3"/><path d="M7 19H18A3 3 0 0 0 17.500 13.200A4 4 0 0 0 10 13.500A3 3 0 0 0 7 19Z" fill="#f4f8fc"/></svg>
<div class="t" style="left:199.500px;top:791px;font-size:8px;color:#f4f6fa!important;letter-spacing:-0.2px">数字电子技术（B...</div>
<svg class="a" style="left:281px;top:785px" width="22" height="22" viewBox="0 0 22 22"><rect width="22" height="22" rx="1" fill="#c8202c"/><path d="M3 19C6 10 11 6 17 4M6 19.500C8.500 12 12.500 8.500 18 7M9.500 20C11 14.500 14 11 18.500 10" stroke="#fff" stroke-width="1.800" fill="none"/><path d="M16.500 1.500L17.300 3.800L19.800 3.800L17.800 5.200L18.600 7.500L16.500 6L14.400 7.500L15.200 5.200L13.200 3.800L15.700 3.800Z" fill="#fff"/></svg>
<div class="a" style="left:312px;top:784px;width:100px;height:23.500px;background:linear-gradient(#98a6ba 0,#8294ac 45%,#74869e 55%,#7c8ea6 100%);border:1px solid #56667c;border-radius:2px"></div>
<svg class="a" style="left:317px;top:786px" width="22" height="20" viewBox="0 0 22 20"><ellipse cx="11" cy="8" rx="9" ry="5.500" fill="#e8eaee" stroke="#333" stroke-width="1"/><ellipse cx="11" cy="7" rx="4" ry="2.500" fill="#333"/><path d="M11 13V17M5 18H17" stroke="#e8eaee" stroke-width="1.500"/></svg>
<div class="t" style="left:340.500px;top:791px;font-size:7.800px;color:#f4f6fa!important;letter-spacing:-0.2px">华硕无线网卡设置</div>
<div class="a" style="left:414.500px;top:784px;width:100px;height:23.500px;background:linear-gradient(#98a6ba 0,#8294ac 45%,#74869e 55%,#7c8ea6 100%);border:1px solid #56667c;border-radius:2px"></div>
<svg class="a" style="left:420px;top:785.500px" width="21" height="21" viewBox="0 0 21 21"><circle cx="10.500" cy="10.500" r="10" fill="#3a5a3a"/><rect x="6" y="5" width="6" height="10" fill="#c8ccc0"/><rect x="12" y="8" width="4" height="7" fill="#8a9a80"/></svg>
<div class="t" style="left:443px;top:791px;font-size:7.800px;color:#f4f6fa!important;letter-spacing:-0.2px">应物1801班长王...</div>
<div class="a" style="left:518px;top:784px;width:100px;height:23.500px;background:linear-gradient(#98a6ba 0,#8294ac 45%,#74869e 55%,#7c8ea6 100%);border:1px solid #56667c;border-radius:2px"></div>
<svg class="a" style="left:523px;top:785.500px" width="21" height="21" viewBox="0 0 21 21"><rect width="21" height="21" rx="1" fill="#1a64e8"/><path d="M3 14L7.500 7L10.500 11.500L13.500 7L18 14H14.500L13.500 12L12 14H9L7.500 12L6.500 14Z" fill="#fff"/></svg>
<div class="t" style="left:547px;top:791px;font-size:7.800px;color:#f4f6fa!important;letter-spacing:-0.2px">腾讯会议</div>
<!-- tray -->
<svg class="a" style="left:837px;top:786px" width="5" height="20" viewBox="0 0 5 20"><g fill="#3a4658"><rect x="0" y="0" width="1" height="1"/><rect x="2" y="0" width="1" height="1"/><rect x="4" y="0" width="1" height="1"/><rect x="0" y="2" width="1" height="1"/><rect x="2" y="2" width="1" height="1"/><rect x="4" y="2" width="1" height="1"/><rect x="0" y="4" width="1" height="1"/><rect x="2" y="4" width="1" height="1"/><rect x="4" y="4" width="1" height="1"/><rect x="0" y="6" width="1" height="1"/><rect x="2" y="6" width="1" height="1"/><rect x="4" y="6" width="1" height="1"/><rect x="0" y="8" width="1" height="1"/><rect x="2" y="8" width="1" height="1"/><rect x="4" y="8" width="1" height="1"/><rect x="0" y="10" width="1" height="1"/><rect x="2" y="10" width="1" height="1"/><rect x="4" y="10" width="1" height="1"/><rect x="0" y="12" width="1" height="1"/><rect x="2" y="12" width="1" height="1"/><rect x="4" y="12" width="1" height="1"/><rect x="0" y="14" width="1" height="1"/><rect x="2" y="14" width="1" height="1"/><rect x="4" y="14" width="1" height="1"/><rect x="0" y="16" width="1" height="1"/><rect x="2" y="16" width="1" height="1"/><rect x="4" y="16" width="1" height="1"/><rect x="0" y="18" width="1" height="1"/><rect x="2" y="18" width="1" height="1"/><rect x="4" y="18" width="1" height="1"/></g></svg>

<svg class="a" style="left:848px;top:788px" width="162" height="14" viewBox="0 0 162 14">
<rect x="1" y="1" width="10.500" height="11.500" fill="#3a8ae8"/><circle cx="6" cy="6.500" r="3" fill="none" stroke="#fff" stroke-width="1.300"/><path d="M8 8.500L10 10.500" stroke="#fff" stroke-width="1.300"/>
<circle cx="20" cy="7" r="4.500" fill="#2a3ab8"/><path d="M18.500 5.500C18.500 3.800 21.500 3.800 21.500 5.500C21.500 6.500 20 6.500 20 8M20 9.200V10" stroke="#c8d0ff" stroke-width="1.100" fill="none"/>
<path d="M31.500 3.500C31.500 1.800 35 1.800 35 3.500C35 4.800 33.200 4.800 33.200 6.500M33.200 8V9" stroke="#e8ecf4" stroke-width="1.200" fill="none"/><circle cx="33.200" cy="11.500" r=".9" fill="#e8ecf4"/>
<path d="M44 2.500H53V7.500C53 10 50.500 11.800 48.500 12.500C46.500 11.800 44 10 44 7.500Z" fill="#2a80e8"/><path d="M45.800 6L48.500 8.500L51.200 6" stroke="#fff" stroke-width="1.300" fill="none"/>
<rect x="59" y="5" width="6" height="5" fill="#2a3038"/><rect x="63" y="2.500" width="5.500" height="5" fill="#e8ecf0" stroke="#2a3038" stroke-width=".8"/><path d="M58.500 11.500H69" stroke="#58c8e8" stroke-width="1.300" stroke-dasharray="1.500 1"/>
<ellipse cx="77.500" cy="6" rx="4.500" ry="3.800" fill="#58c038"/><ellipse cx="81.500" cy="8.500" rx="3.500" ry="3" fill="#e8f4e0"/>
<ellipse cx="94" cy="7.500" rx="4.800" ry="5" fill="#222"/><ellipse cx="94" cy="4" rx="3.200" ry="3.200" fill="#222"/><ellipse cx="94.500" cy="9" rx="2.800" ry="3" fill="#fff"/><path d="M90 6.500Q94 8.500 98.500 6.500L98.500 8Q94 10 90 8Z" fill="#e03a2a"/><ellipse cx="96.500" cy="11" rx="2.800" ry="1.800" fill="#f0a040"/>
<path d="M104.500 12.500H114V3Z" fill="#e8ecf0" stroke="#3a4250" stroke-width=".6"/><path d="M107.500 12.500V9.500M110.500 12.500V6.500" stroke="#3a4250" stroke-width=".6"/>
<path d="M119.500 5H122L125.500 2V12L122 9H119.500Z" fill="#b83020"/><path d="M127 4.500Q129 7 127 9.500" stroke="#d04030" stroke-width="1" fill="none"/>
<path d="M135 5H137.500L141 2V12L137.500 9H135Z" fill="#f0f2f6"/><path d="M142.500 4.500Q144.500 7 142.500 9.500" stroke="#f0f2f6" stroke-width="1" fill="none"/>
<rect x="150" y="5" width="10" height="6" rx="1" fill="#e4e6ea"/><rect x="152" y="2" width="6" height="3.500" fill="#c4c8d0"/><rect x="152" y="8.500" width="6" height="4" fill="#fafafa"/>
</svg>

<div class="t" style="left:1029px;top:786.300px;font-size:8px;color:#e8eef6!important;letter-spacing:-0.100px">8:50</div>
<div class="t" style="left:1018.500px;top:797.800px;font-size:8px;color:#e8eef6!important;letter-spacing:-0.100px">2020-2-24</div>
<div class="a" style="left:1060px;top:784px;width:10px;height:24px;background:linear-gradient(90deg,#56667c,#8a98ac 30%,#74849a);border-left:1px solid #4a5a70"></div>

<!-- green brackets -->
<div class="a" style="left:4px;top:142px;width:76px;height:4px;background:#10d080"></div>
<div class="a" style="left:4px;top:142px;width:4px;height:76px;background:#10d080"></div>
<div class="a" style="left:994px;top:142px;width:76px;height:4px;background:#10d080"></div>
<div class="a" style="left:1066px;top:142px;width:4px;height:76px;background:#10d080"></div>
<div class="a" style="left:4px;top:732px;width:4px;height:51px;background:#10d080"></div>
<div class="a" style="left:1066px;top:732px;width:4px;height:51px;background:#10d080"></div>
</div>
</div>
<svg width="0" height="0" style="position:absolute"><defs><clipPath id="cc"><circle cx="27" cy="27" r="26.500"/></clipPath><filter id="b1"><feGaussianBlur stdDeviation="0.900"/></filter><filter id="b2"><feGaussianBlur stdDeviation="2"/></filter><filter id="b05"><feGaussianBlur stdDeviation="0.500"/></filter></defs></svg>
<div class="a" style="left:1077px;top:244px;width:165px;height:64px;background:#222"></div>
<div class="a" style="left:1077px;top:308px;width:165px;height:27px;background:#0d0d0d"></div>
<svg class="a" style="left:1132.500px;top:253.5px" width="54" height="54" viewBox="0 0 54 54"><defs><linearGradient id="sky" x1="0.1" y1="0" x2="0" y2="1"><stop offset="0" stop-color="#8496ac"/><stop offset=".45" stop-color="#b4c4d8"/><stop offset=".8" stop-color="#c6c8d2"/><stop offset=".93" stop-color="#c4b4b0"/><stop offset=".97" stop-color="#3a3c40"/></linearGradient></defs>
<circle cx="27" cy="27" r="26.500" fill="url(#sky)"/>
<path d="M10 30L36 10" stroke="#c8c0c4" stroke-width="3" opacity=".5" filter="url(#b2)"/></svg>
<svg class="a" style="left:1083px;top:312px" width="18" height="20" viewBox="0 0 18 20">
<rect x="5.300" y="1" width="7.400" height="11.500" rx="3.700" fill="#f2f2f2"/>
<path d="M2.500 8.500V9.500C2.500 13 5.500 15.300 9 15.300S15.500 13 15.500 9.500V8.500" stroke="#f2f2f2" stroke-width="1.500" fill="none"/>
<path d="M9 15V18.500" stroke="#f2f2f2" stroke-width="1.800" fill="none"/>
<path d="M1.500 17L16 2" stroke="#0d0d0d" stroke-width="3.600"/>
<path d="M1.500 17L16 2" stroke="#e8524c" stroke-width="1.500"/>
</svg>
<div class="t" style="left:1106px;top:315px;font-size:14.200px;color:#fff;letter-spacing:-0.75px">碧月</div>
<div class="a" style="left:1077px;top:336px;width:165px;height:64px;background:#222"></div>
<div class="a" style="left:1077px;top:400px;width:165px;height:27px;background:#0d0d0d"></div>
<svg class="a" style="left:1132.500px;top:345.5px" width="54" height="54" viewBox="0 0 54 54"><circle cx="27" cy="27" r="26.500" fill="#fdfcfc"/>
<g clip-path="url(#cc)"><g filter="url(#b1)">
<path d="M6 50L20 36L36 36L42 54L10 56Z" fill="#454c6c"/>
<path d="M17 44L27 36L30 54H16Z" fill="#ecd9d2"/>
<ellipse cx="26" cy="25" rx="11" ry="12" fill="#f0d6cf"/>
<path d="M9 14C12 4 22 2 28 3C38 2 46 8 46 16C46 22 42 24 40 20L38 26L34 14L28 17L22 14L17 26L14 18C11 20 8 18 9 14Z" fill="#dfae62"/>
<path d="M21 28Q26 32 31 28" stroke="#b06070" stroke-width="2" fill="none"/>
<circle cx="42" cy="42" r="7" fill="#f2501c"/><circle cx="41" cy="43" r="2.500" fill="#f8a030"/>
</g></g></svg>
<div class="a" style="left:1077px;top:400px;width:165px;height:27px;background:#0d0d0d"></div>
<svg class="a" style="left:1083px;top:404px" width="18" height="20" viewBox="0 0 18 20">
<rect x="5.300" y="1" width="7.400" height="11.500" rx="3.700" fill="#f2f2f2"/>
<path d="M2.500 8.500V9.500C2.500 13 5.500 15.300 9 15.300S15.500 13 15.500 9.500V8.500" stroke="#f2f2f2" stroke-width="1.500" fill="none"/>
<path d="M9 15V18.500" stroke="#f2f2f2" stroke-width="1.800" fill="none"/>
<path d="M1.500 17L16 2" stroke="#0d0d0d" stroke-width="3.600"/>
<path d="M1.500 17L16 2" stroke="#e8524c" stroke-width="1.500"/>
</svg>
<div class="t" style="left:1106px;top:407px;font-size:14.200px;color:#fff;letter-spacing:-0.75px">呆萌小丸子</div>
<div class="a" style="left:1077px;top:428px;width:165px;height:64px;background:#222"></div>
<div class="a" style="left:1077px;top:492px;width:165px;height:27px;background:#0d0d0d"></div>
<svg class="a" style="left:1132.500px;top:437.5px" width="54" height="54" viewBox="0 0 54 54"><circle cx="27" cy="27" r="26.500" fill="#e4e4e4"/>
<g clip-path="url(#cc)"><path d="M27 9.500C20 9.500 16 13 16 20C16 22 16 24 14.500 26C14.500 30 16 31 17 32C18 37 20 39 21 41C21 44 19 46 14 48C11 49 9 51 8 54H46C45 51 43 49 40 48C35 46 33 44 33 41C34 39 36 37 37 32C38 31 39.500 30 39.500 26C38 24 38 22 38 20C38 13 34 9.500 27 9.500Z" fill="#c4c4c4" filter="url(#b05)"/></g></svg>
<div class="a" style="left:1077px;top:492px;width:165px;height:27px;background:#0d0d0d"></div>
<svg class="a" style="left:1083px;top:496px" width="18" height="20" viewBox="0 0 18 20">
<rect x="5.300" y="1" width="7.400" height="11.500" rx="3.700" fill="#f2f2f2"/>
<path d="M2.500 8.500V9.500C2.500 13 5.500 15.300 9 15.300S15.500 13 15.500 9.500V8.500" stroke="#f2f2f2" stroke-width="1.500" fill="none"/>
<path d="M9 15V18.500" stroke="#f2f2f2" stroke-width="1.800" fill="none"/>
<path d="M1.500 17L16 2" stroke="#0d0d0d" stroke-width="3.600"/>
<path d="M1.500 17L16 2" stroke="#e8524c" stroke-width="1.500"/>
</svg>
<div class="t" style="left:1106px;top:499px;font-size:14.200px;color:#fff;letter-spacing:-0.75px">应物1802王晨星</div>
<div class="a" style="left:1077px;top:520px;width:165px;height:64px;background:#222"></div>
<div class="a" style="left:1077px;top:584px;width:165px;height:27px;background:#0d0d0d"></div>
<svg class="a" style="left:1132.500px;top:529.5px" width="54" height="54" viewBox="0 0 54 54"><circle cx="27" cy="27" r="26.500" fill="#c88a96"/>
<g clip-path="url(#cc)"><g filter="url(#b1)">
<rect x="0" y="0" width="54" height="14" fill="#9c8c90"/>
<rect x="14" y="4" width="13" height="9" fill="#c08a58"/>
<path d="M0 14H54V50H0Z" fill="#cf8f9b"/>
<path d="M10 50L14 30L24 24H32L42 32L44 50Z" fill="#c4bcd8"/>
<path d="M20 46L22 36H34L36 46Z" fill="#8a3040"/>
<ellipse cx="27" cy="30" rx="7" ry="7" fill="#f4e4e0"/>
<path d="M18 24C18 14 22 10 28 10C35 10 38 16 37 24L34 28L30 24L27 28L23 25L20 30Z" fill="#4a3034"/>
<path d="M26 30H28V46H26Z" fill="#f4f0f0"/>
<path d="M8 50H46V54H8Z" fill="#e8e0a0"/>
</g></g></svg>
<div class="a" style="left:1077px;top:584px;width:165px;height:27px;background:#0d0d0d"></div>
<svg class="a" style="left:1083px;top:588px" width="18" height="20" viewBox="0 0 18 20">
<rect x="5.300" y="1" width="7.400" height="11.500" rx="3.700" fill="#f2f2f2"/>
<path d="M2.500 8.500V9.500C2.500 13 5.500 15.300 9 15.300S15.500 13 15.500 9.500V8.500" stroke="#f2f2f2" stroke-width="1.500" fill="none"/>
<path d="M9 15V18.500" stroke="#f2f2f2" stroke-width="1.800" fill="none"/>
<path d="M1.500 17L16 2" stroke="#0d0d0d" stroke-width="3.600"/>
<path d="M1.500 17L16 2" stroke="#e8524c" stroke-width="1.500"/>
</svg>
<div class="t" style="left:1106px;top:591px;font-size:14.200px;color:#fff;letter-spacing:-0.75px">1段楠</div>
<div class="a" style="left:1077px;top:612px;width:165px;height:64px;background:#222"></div>
<div class="a" style="left:1077px;top:676px;width:165px;height:27px;background:#0d0d0d"></div>
<svg class="a" style="left:1132.500px;top:621.5px" width="54" height="54" viewBox="0 0 54 54"><circle cx="27" cy="27" r="26.500" fill="#6a4838"/>
<g clip-path="url(#cc)"><g filter="url(#b1)">
<rect x="0" y="0" width="54" height="54" fill="#70503c"/>
<rect x="2" y="4" width="8" height="44" fill="#c08848"/>
<rect x="10" y="6" width="8" height="42" fill="#70302c"/>
<rect x="17" y="2" width="7" height="16" fill="#f4e8c8"/>
<rect x="24" y="2" width="5" height="30" fill="#b07848"/>
<rect x="29" y="2" width="6" height="20" fill="#a06878"/>
<rect x="36" y="10" width="18" height="34" fill="#54504c"/>
<path d="M18 46L20 28C22 22 30 22 32 28L34 16H37L38 46Z" fill="#c89858"/>
<ellipse cx="25" cy="27" rx="6" ry="5" fill="#d8b070"/>
<rect x="8" y="46" width="40" height="8" fill="#54486c"/>
</g></g></svg>
<div class="a" style="left:1077px;top:676px;width:165px;height:27px;background:#0d0d0d"></div>
<svg class="a" style="left:1083px;top:680px" width="18" height="20" viewBox="0 0 18 20">
<rect x="5.300" y="1" width="7.400" height="11.500" rx="3.700" fill="#f2f2f2"/>
<path d="M2.500 8.500V9.500C2.500 13 5.500 15.300 9 15.300S15.500 13 15.500 9.500V8.500" stroke="#f2f2f2" stroke-width="1.500" fill="none"/>
<path d="M9 15V18.500" stroke="#f2f2f2" stroke-width="1.800" fill="none"/>
<path d="M1.500 17L16 2" stroke="#0d0d0d" stroke-width="3.600"/>
<path d="M1.500 17L16 2" stroke="#e8524c" stroke-width="1.500"/>
</svg>
<div class="t" style="left:1106px;top:683px;font-size:14.200px;color:#fff;letter-spacing:-0.75px">18信科01董雨涵</div>
<div class="a" style="left:1090px;top:247px;width:138px;height:25px;background:rgba(12,12,12,.7)"></div>
<svg class="a" style="left:1150px;top:247px" width="20" height="12" viewBox="0 0 20 12"><path d="M2.500 9.800L9.700 3L16.900 9.800" stroke="#fff" stroke-width="2" fill="none"/></svg>
<div class="a" style="left:1077px;top:244px;width:165px;height:92px;border:3px solid #696969"></div>
<div class="a" style="left:1077px;top:244px;width:13px;height:64px;border-left:3px solid #fff;border-top:3px solid #fff"></div>
<div class="a" style="left:1228px;top:244px;width:14px;height:64px;border-right:3px solid #fff;border-top:3px solid #fff"></div>
<div class="a" id="toolbar"></div>

<style>
.tl{position:absolute;top:868px;font-size:14px;color:#2c2c2c;white-space:nowrap;line-height:16px;text-align:center;letter-spacing:-0.4px}
</style>
<!-- mic muted -->
<svg class="a" style="left:258px;top:826px" width="32" height="38" viewBox="0 0 32 38">
<rect x="10" y="3" width="12" height="21" rx="6" fill="#5f6168"/>
<path d="M5.500 16.500V18.500C5.500 24.500 10 28.300 16 28.300S26.500 24.500 26.500 18.500V16.500" stroke="#5f6168" stroke-width="2.400" fill="none"/>
<path d="M16 28V33.500M9.500 34H22.500" stroke="#5f6168" stroke-width="2.400" fill="none"/>
<path d="M3.500 30.500L28.500 3.500" stroke="#f8f8f9" stroke-width="5"/>
<path d="M3.500 30.500L28.500 3.500" stroke="#f4564f" stroke-width="1.800"/>
</svg>
<div class="tl" style="left:242px;width:60px">解除静音</div>
<svg class="a" style="left:313px;top:840px" width="13" height="8" viewBox="0 0 13 8"><path d="M6.500 .5L12.200 7.500H.8Z" fill="#55575c"/></svg>
<!-- video off -->
<svg class="a" style="left:360px;top:828px" width="44" height="34" viewBox="0 0 44 34">
<rect x="2.500" y="5" width="26" height="24.500" rx="3" fill="#5f6168"/>
<path d="M30.500 14L41 6.500V28L30.500 20.500Z" fill="#5f6168"/>
<path d="M5.500 31.500L30.500 2.500" stroke="#f8f8f9" stroke-width="5"/>
<path d="M5.500 31.500L30.500 2.500" stroke="#f4564f" stroke-width="1.800"/>
</svg>
<div class="tl" style="left:351px;width:60px">开启视频</div>
<svg class="a" style="left:422px;top:840px" width="13" height="8" viewBox="0 0 13 8"><path d="M6.500 .5L12.200 7.500H.8Z" fill="#55575c"/></svg>
<!-- share screen -->
<svg class="a" style="left:472px;top:828px" width="38" height="33" viewBox="0 0 38 33">
<rect x="2" y="2" width="34" height="23.500" rx="1.500" fill="#5b5f66" stroke="#2bb673" stroke-width="2.200"/>
<path d="M9.500 30.500H28.500" stroke="#2bb673" stroke-width="2"/>
<path d="M12.500 19C13.500 14 17.500 11.500 21 11.500V8.500L26.500 13.200L21 17.800V15C17.500 15 14.500 16 12.500 19Z" fill="#2bb673"/>
</svg>
<div class="tl" style="left:461px;width:60px">共享屏幕</div>
<!-- invite -->
<svg class="a" style="left:558px;top:828px" width="44" height="34" viewBox="0 0 44 34">
<path d="M15.500 1.500C10.500 1.500 8.300 5 8.500 9.500C8.700 13.500 10 16 12 18C12 21 9.500 23 5.500 25C3 26.300 1.800 28.500 1.500 31.500H29.500C29.200 28.500 28 26.300 25.500 25C21.500 23 19 21 19 18C21 16 22.300 13.500 22.500 9.500C22.700 5 20.500 1.500 15.500 1.500Z" fill="#5f6168"/>
<circle cx="33" cy="23.500" r="9.300" fill="#f8f8f9"/>
<circle cx="33" cy="23.500" r="7.700" fill="#5f6168"/>
<path d="M33 19.500V27.500M29 23.500H37" stroke="#f8f8f9" stroke-width="2.200"/>
</svg>
<div class="tl" style="left:549px;width:60px">邀请</div>
<!-- members -->
<svg class="a" style="left:654px;top:828px" width="44" height="34" viewBox="0 0 44 34">
<path d="M26.500 1.500C22 1.500 20 5 20.200 9.500C20.400 13.500 21.500 16 23.500 18C23.500 21 21.500 22.500 18 24.500L22 31.500H41.500C41.200 28.500 40 26.300 37.500 25C33.500 23 31 21 31 18C33 16 34.300 13.500 34.500 9.500C34.700 5 31.500 1.500 26.500 1.500Z" fill="#5f6168"/>
<path d="M15.500 1.500C10.500 1.500 8.300 5 8.500 9.500C8.700 13.500 10 16 12 18C12 21 9.500 23 5.500 25C3 26.300 1.800 28.500 1.500 31.500H29.500C29.200 28.500 28 26.300 25.500 25C21.500 23 19 21 19 18C21 16 22.300 13.500 22.500 9.500C22.700 5 20.500 1.500 15.500 1.500Z" fill="#5f6168" stroke="#f8f8f9" stroke-width="1.600"/>
</svg>
<div class="tl" style="left:645px;width:60px">成员(71)</div>
<!-- chat -->
<svg class="a" style="left:764px;top:827px" width="36" height="36" viewBox="0 0 36 36">
<path d="M5 2H31C32.700 2 34 3.300 34 5V31C34 33 32 34.500 29.500 34L26 28.500H5C3.300 28.500 2 27.200 2 25.500V5C2 3.300 3.300 2 5 2Z" fill="#5f6168"/>
<circle cx="10" cy="15.200" r="2.700" fill="#f8f8f9"/><circle cx="18" cy="15.200" r="2.700" fill="#f8f8f9"/><circle cx="26" cy="15.200" r="2.700" fill="#f8f8f9"/>
</svg>
<div class="tl" style="left:752px;width:60px">聊天</div>
<!-- docs -->
<svg class="a" style="left:872px;top:827px" width="32" height="36" viewBox="0 0 32 36">
<path d="M5 1.700H20L30 11.500V31C30 32.700 28.700 34 27 34H5C3.300 34 2 32.700 2 31V4.700C2 3 3.300 1.700 5 1.700Z" fill="#5f6168"/>
<path d="M20.500 1.700V8.500C20.500 10 21.500 11.200 23 11.200H30Z" fill="#f8f8f9"/>
<path d="M21.700 3.500L28 9.800H23.500C22.500 9.800 21.700 9 21.700 8Z" fill="#5f6168"/>
<path d="M8.500 17.800H23.500M8.500 24.200H23.500" stroke="#f8f8f9" stroke-width="3"/>
</svg>
<div class="tl" style="left:858px;width:60px">会议文档</div>
<!-- settings -->
<svg class="a" style="left:964px;top:829px" width="32" height="32" viewBox="0 0 32 32">
<rect x="1" y="1" width="13.500" height="13.500" rx="2" fill="#5f6168"/>
<rect x="17.700" y="1.700" width="12.300" height="12.300" rx="2" fill="#fbfbfb" stroke="#5f6168" stroke-width="1.400"/>
<rect x="1" y="17.500" width="13.500" height="13.500" rx="2" fill="#5f6168"/>
<rect x="17" y="17.500" width="13.500" height="13.500" rx="2" fill="#5f6168"/>
</svg>
<div class="tl" style="left:950px;width:60px">设置</div>
<div class="a" style="left:1103px;top:831px;width:95px;height:44px;border:1px solid #ea5a5f;border-radius:5px;background:#fbfbfb"></div>
<div class="t" style="left:1103px;top:844px;width:95px;text-align:center;font-size:18px;color:#e5484d;letter-spacing:-1px">离开会议</div>


<div class="t" id="ttl" style="left:506px;top:20px;font-size:18px;color:#1a1a1a;letter-spacing:-0.36px">腾讯会议 会议号：361 399 442</div>
<svg class="a" style="left:1140px;top:14px" width="104" height="30" viewBox="0 0 104 30">
<path d="M8 14.3H23" stroke="#555" stroke-width="1.8" fill="none"/>
<rect x="47.2" y="9.2" width="11.6" height="11.6" stroke="#555" stroke-width="1.6" fill="none"/>
<path d="M84.5 9.5L95.5 20.5M95.5 9.5L84.5 20.5" stroke="#555" stroke-width="1.7" fill="none"/>
</svg>
<div class="a" style="left:16px;top:57px;width:24px;height:24px;background:#f4f4f6;border:1px solid #e0e1e4;border-radius:2px"></div>
<svg class="a" style="left:20px;top:61px" width="16" height="17" viewBox="0 0 16 17"><path d="M8 .6C6 2 3.500 2.600 1.200 2.700V8.500C1.200 12.500 4.500 15 8 16.400C11.500 15 14.800 12.500 14.800 8.500V2.700C12.500 2.600 10 2 8 .6Z" fill="#c9cacd"/><path d="M8 5.500V11.500M5 8.500H11" stroke="#f4f4f6" stroke-width="1.800"/></svg>
<div class="a" style="left:1205px;top:57px;width:24px;height:24px;background:#f2f3f5;border:1px solid #e2e3e6;border-radius:2px"></div>
<svg class="a" style="left:1207px;top:59px" width="20" height="20" viewBox="0 0 20 20"><path d="M2 7V2H7M13 2H18V7M18 13V18H13M7 18H2V13" stroke="#5a5c60" stroke-width="2" fill="none"/></svg>

<div class="a" style="left:2px;top:0;width:2px;height:899px;background:#fff"></div><div class="a" id="deskL"></div><div class="a" style="left:1248px;top:0;width:2px;height:899px;background:#fdfdfd"></div>
<div class="a" id="deskB"></div>
</body>
</html>
